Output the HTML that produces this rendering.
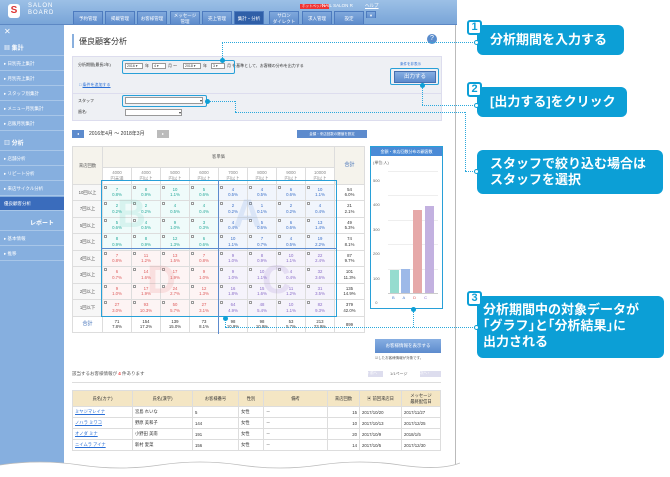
<!DOCTYPE html>
<html><head><meta charset="utf-8">
<style>
*{box-sizing:border-box;margin:0;padding:0}
body{width:670px;height:477px;background:#fff;font-family:"Liberation Sans","Noto Sans CJK JP",sans-serif;position:relative;overflow:hidden;color:#333}
.a{position:absolute}
#hdr{left:0;top:0;width:457px;height:25px;background:linear-gradient(#9cc0e6,#79a5d8);border-bottom:1px solid #5c88c4}
.tab{position:absolute;top:11px;height:13px;background:linear-gradient(#7fa8dc,#5e8ccc);color:#fff;font-size:4.5px;text-align:center;line-height:13px;border:1px solid #4d7bbf;border-bottom:none}
.tab.s{background:#2f5fa8}
.tab.t{line-height:6px;padding-top:1px}
#side{left:0;top:25px;width:64px;height:445px;background:#86afdf}
.si{position:absolute;left:0;width:64px;height:14px;border-bottom:1px solid #a8c6e8;color:#fff;font-size:4.5px;line-height:14px;padding-left:4px}
.sh{font-size:6px;font-weight:bold}
.sel{background:#3a6cbc}
#main{left:64px;top:25px;width:392px;height:440px;background:#fff;border-right:1px solid #bbb}
.fs{font-size:4.5px}
table.g{position:absolute;left:72px;top:146px;border-collapse:collapse;font-size:4.3px}
table.g td{border:1px solid #ddd;text-align:center;vertical-align:middle;position:relative;width:29px;height:16.5px;line-height:5.5px}
table.g td i{position:absolute;left:1px;top:1px;width:3px;height:3px;border:1px solid #999;background:#fff}
.b{background:#effbfa;color:#26a99a}.A{background:#f1f5fc;color:#3a6fc8}.d{background:#fdf4f4;color:#de5c5c}.c{background:#f5f3fb;color:#8a6cc8}
.h{background:#f5f3ec;color:#555}
.co{position:absolute;background:#0c9fd6;border-radius:6px;color:#fff;font-weight:bold;font-size:13px;line-height:16px;padding-left:13px}
.num{position:absolute;width:15px;height:15px;background:#fff;border:2px solid #0c9fd6;border-radius:3px;color:#0c9fd6;font-weight:bold;font-size:11px;line-height:11px;text-align:center}
.dh{position:absolute;border-top:1px dotted #2aa8dc;height:0}
.dv{position:absolute;border-left:1px dotted #2aa8dc;width:0}
.dot{position:absolute;width:5px;height:5px;border-radius:50%;background:#0c9fd6}
.wb{position:absolute;border:1.5px solid #28a0d8}
.ct{position:absolute;left:72px;top:390px;border-collapse:collapse;font-size:4.3px;width:369px}
.ct td{border:1px solid #ddd;height:11px;padding:0 2px}
.ct tr:first-child td{background:#f4e6c4;height:16px;text-align:center}
.lk{color:#2a6fd6;text-decoration:underline}
.sb{position:absolute;height:6px;background:#fff;border:1px solid #999;font-size:3.5px;line-height:4px;padding-left:1px}
</style></head><body>

<div id="hdr" class="a">
 <div class="a" style="left:8px;top:4px;width:12px;height:14px;background:#fff;border-radius:3px;color:#d33;font-weight:bold;font-size:10px;line-height:14px;text-align:center">S</div>
 <div class="a" style="left:28px;top:3px;color:#fff;font-size:6px;line-height:7px;letter-spacing:1px">SALON<br>BOARD</div>
 <div class="a fs" style="left:300px;top:4px;background:#e33;color:#fff;padding:0 2px;font-size:3.5px">ホットペッパー</div>
 <div class="a fs" style="left:322px;top:3px;color:#fff">NAIL SALON R</div>
 <div class="a fs" style="left:365px;top:3px;color:#fff;text-decoration:underline">ヘルプ</div>
 <div class="tab" style="left:73px;width:30px">予約管理</div>
 <div class="tab" style="left:105px;width:30px">掲載管理</div>
 <div class="tab" style="left:137px;width:30px">お客様管理</div>
 <div class="tab t" style="left:170px;width:30px">メッセージ<br>管理</div>
 <div class="tab" style="left:202px;width:30px">売上管理</div>
 <div class="tab s" style="left:234px;width:30px">集計・分析</div>
 <div class="tab t" style="left:269px;width:30px">サロン<br>ダイレクト</div>
 <div class="tab" style="left:302px;width:30px">求人管理</div>
 <div class="tab" style="left:334px;width:30px">設定</div>
 <div class="tab" style="left:366px;width:10px;top:11px;height:7px;line-height:7px">▾</div>
</div>

<div id="side" class="a">
 <div class="si" style="top:0;font-size:8px;border:none">✕</div>
 <div class="si sh" style="top:17px">▦ 集計</div>
 <div class="si" style="top:32px">▸ 日別売上集計</div>
 <div class="si" style="top:47px">▸ 月別売上集計</div>
 <div class="si" style="top:62px">▸ スタッフ別集計</div>
 <div class="si" style="top:77px">▸ メニュー月別集計</div>
 <div class="si" style="top:92px">▸ 店販月別集計</div>
 <div class="si sh" style="top:112px">▥ 分析</div>
 <div class="si" style="top:127px">▸ 店舗分析</div>
 <div class="si" style="top:142px">▸ リピート分析</div>
 <div class="si" style="top:157px">▸ 来店サイクル分析</div>
 <div class="si sel" style="top:172px">優良顧客分析</div>
 <div class="si sh" style="top:192px;padding-left:30px">レポート</div>
 <div class="si" style="top:207px">▸ 基本情報</div>
 <div class="si" style="top:222px">▸ 推移</div>
</div>

<div id="main" class="a"></div>
<div class="a" style="left:72px;top:34px;width:2px;height:14px;background:#8ab0de"></div>
<div class="a" style="left:79px;top:36px;font-size:8px">優良顧客分析</div>
<div class="a" style="left:427px;top:34px;width:10px;height:10px;border-radius:50%;background:#5a8ccc;color:#fff;font-size:7px;text-align:center;line-height:10px">?</div>

<div class="a" style="left:72px;top:56px;width:370px;height:65px;background:#eef0f4;border:1px solid #dde"></div>
<div class="a" style="left:72px;top:93px;width:370px;height:1px;background:#dde"></div>
<div class="a fs" style="left:78px;top:62px;font-size:4px">分析期間(最長2年)</div>
<div class="sb" style="left:125px;top:63px;width:18px">2016 ▾</div>
<div class="a" style="left:145px;top:63px;font-size:4px">年</div>
<div class="sb" style="left:152px;top:63px;width:14px">4 ▾</div>
<div class="a" style="left:168px;top:63px;font-size:4px">月 ～</div>
<div class="sb" style="left:183px;top:63px;width:18px">2018 ▾</div>
<div class="a" style="left:203px;top:63px;font-size:4px">年</div>
<div class="sb" style="left:211px;top:63px;width:14px">3 ▾</div>
<div class="a" style="left:227px;top:63px;font-size:4px;white-space:nowrap">月 を基準として、お客様の分布を出力する</div>
<div class="a fs" style="left:79px;top:82px;color:#2a6fd6;font-size:4px">□ <u>条件を追加する</u></div>
<div class="a fs" style="left:78px;top:98px;font-size:4px">スタッフ</div>
<div class="a fs" style="left:78px;top:109px;font-size:4px">歯名:</div>
<div class="a" style="left:125px;top:97px;width:78px;height:7px;background:#fff;border:1px solid #999;font-size:4px;text-align:right;line-height:5px">▾</div>
<div class="a" style="left:125px;top:109px;width:57px;height:7px;background:#fff;border:1px solid #999;font-size:4px;text-align:right;line-height:5px">▾</div>
<div class="a fs" style="left:400px;top:62px;color:#2a6fd6;font-size:3.5px">条件を非表示</div>
<div class="a" style="left:394px;top:71px;width:42px;height:12px;background:linear-gradient(#86aee2,#5d8bcd);border:1px solid #466fb0;color:#fff;font-size:5.5px;text-align:center;line-height:10px">出力する</div>
<div class="wb" style="left:390px;top:68px;width:49px;height:17px;border-radius:2px"></div>
<div class="wb" style="left:122px;top:60px;width:113px;height:14px;border-radius:2px"></div>
<div class="wb" style="left:122px;top:95px;width:85px;height:12px;border-radius:2px"></div>

<div class="a" style="left:72px;top:130px;width:12px;height:8px;background:#5d8bcd;color:#fff;font-size:4px;text-align:center;line-height:8px">◂</div>
<div class="a" style="left:89px;top:130px;font-size:5px">2016年4月 ～ 2018年3月</div>
<div class="a" style="left:157px;top:130px;width:12px;height:8px;background:#bbb;color:#fff;font-size:4px;text-align:center;line-height:8px">▸</div>
<div class="a" style="left:297px;top:130px;width:70px;height:8px;background:#5d8bcd;color:#fff;font-size:3.5px;text-align:center;line-height:8px">金額・来店回数の閾値を設定</div>

<table class="g">
<tr><td class="h" rowspan="2" style="width:30px">来店回数</td><td class="h" colspan="8" style="height:21px">客単価</td><td class="h" rowspan="2" style="width:30px;color:#2a5fb0;font-size:5px">合計</td></tr>
<tr><td style="height:13px;color:#888">4000<br>円未満</td><td style="color:#888">4000<br>円以上</td><td style="color:#888">5000<br>円以上</td><td style="color:#888">6000<br>円以上</td><td style="color:#888">7000<br>円以上</td><td style="color:#888">8000<br>円以上</td><td style="color:#888">9000<br>円以上</td><td style="color:#888">10000<br>円以上</td></tr>
<tr><td class="h" style="background:#f7f7f7">10回以上</td><td class="b"><i></i>7<br>0.8%</td><td class="b"><i></i>8<br>0.9%</td><td class="b"><i></i>10<br>1.1%</td><td class="b"><i></i>5<br>0.6%</td><td class="A"><i></i>4<br>0.5%</td><td class="A"><i></i>4<br>0.5%</td><td class="A"><i></i>6<br>0.6%</td><td class="A"><i></i>10<br>1.1%</td><td>54<br>6.0%</td></tr>
<tr><td class="h" style="background:#f7f7f7">7回以上</td><td class="b"><i></i>2<br>0.2%</td><td class="b"><i></i>2<br>0.2%</td><td class="b"><i></i>4<br>0.5%</td><td class="b"><i></i>4<br>0.4%</td><td class="A"><i></i>2<br>0.2%</td><td class="A"><i></i>1<br>0.1%</td><td class="A"><i></i>2<br>0.2%</td><td class="A"><i></i>4<br>0.4%</td><td>21<br>2.1%</td></tr>
<tr><td class="h" style="background:#f7f7f7">5回以上</td><td class="b"><i></i>5<br>0.6%</td><td class="b"><i></i>4<br>0.5%</td><td class="b"><i></i>9<br>1.0%</td><td class="b"><i></i>3<br>0.3%</td><td class="A"><i></i>4<br>0.4%</td><td class="A"><i></i>5<br>0.6%</td><td class="A"><i></i>6<br>0.6%</td><td class="A"><i></i>13<br>1.4%</td><td>49<br>5.3%</td></tr>
<tr><td class="h" style="background:#f7f7f7">3回以上</td><td class="b"><i></i>8<br>0.9%</td><td class="b"><i></i>8<br>0.9%</td><td class="b"><i></i>12<br>1.3%</td><td class="b"><i></i>6<br>0.6%</td><td class="A"><i></i>10<br>1.1%</td><td class="A"><i></i>7<br>0.7%</td><td class="A"><i></i>4<br>0.5%</td><td class="A"><i></i>19<br>2.2%</td><td>74<br>8.1%</td></tr>
<tr><td class="h" style="background:#f7f7f7">4回以上</td><td class="d"><i></i>7<br>0.8%</td><td class="d"><i></i>11<br>1.2%</td><td class="d"><i></i>13<br>1.5%</td><td class="d"><i></i>7<br>0.8%</td><td class="c"><i></i>9<br>1.0%</td><td class="c"><i></i>8<br>0.9%</td><td class="c"><i></i>10<br>1.1%</td><td class="c"><i></i>22<br>2.4%</td><td>87<br>9.7%</td></tr>
<tr><td class="h" style="background:#f7f7f7">3回以上</td><td class="d"><i></i>6<br>0.7%</td><td class="d"><i></i>14<br>1.6%</td><td class="d"><i></i>17<br>1.9%</td><td class="d"><i></i>9<br>1.0%</td><td class="c"><i></i>9<br>1.0%</td><td class="c"><i></i>10<br>1.1%</td><td class="c"><i></i>4<br>0.4%</td><td class="c"><i></i>32<br>3.6%</td><td>101<br>11.3%</td></tr>
<tr><td class="h" style="background:#f7f7f7">2回以上</td><td class="d"><i></i>9<br>1.0%</td><td class="d"><i></i>17<br>1.9%</td><td class="d"><i></i>24<br>2.7%</td><td class="d"><i></i>12<br>1.3%</td><td class="c"><i></i>16<br>1.8%</td><td class="c"><i></i>15<br>1.6%</td><td class="c"><i></i>11<br>1.2%</td><td class="c"><i></i>31<br>3.5%</td><td>135<br>14.9%</td></tr>
<tr><td class="h" style="background:#f7f7f7">1回以下</td><td class="d"><i></i>27<br>3.0%</td><td class="d"><i></i>93<br>10.3%</td><td class="d"><i></i>50<br>5.7%</td><td class="d"><i></i>27<br>3.1%</td><td class="c"><i></i>64<br>4.9%</td><td class="c"><i></i>48<br>5.4%</td><td class="c"><i></i>10<br>1.1%</td><td class="c"><i></i>82<br>9.3%</td><td>379<br>42.0%</td></tr>
<tr><td style="color:#2a5fb0;font-size:5px">合計</td><td>71<br>7.8%</td><td>154<br>17.2%</td><td>139<br>15.0%</td><td>73<br>8.1%</td><td>98<br>10.9%</td><td>98<br>10.9%</td><td>53<br>5.7%</td><td>213<br>23.9%</td><td>899</td></tr>
</table>
<div class="a" style="left:117px;top:192px;font-size:40px;color:rgba(80,200,180,.15);font-weight:bold">B</div>
<div class="a" style="left:233px;top:192px;font-size:40px;color:rgba(90,140,220,.15);font-weight:bold">A</div>
<div class="a" style="left:147px;top:258px;font-size:40px;color:rgba(230,110,110,.15);font-weight:bold">D</div>
<div class="a" style="left:262px;top:258px;font-size:40px;color:rgba(140,110,200,.15);font-weight:bold">C</div>
<div class="wb" style="left:101px;top:180px;width:236px;height:137px;border-width:1px"></div>
<div class="a" style="left:218px;top:180px;width:1px;height:154px;background:#5d8bcd"></div>
<div class="a" style="left:101px;top:248px;width:236px;height:1px;background:#5d8bcd"></div>

<div class="a" style="left:370px;top:146px;width:73px;height:163px;border:1.5px solid #28a0d8;background:#fff"></div>
<div class="a" style="left:371px;top:147px;width:71px;height:9px;background:#4a8ad6;color:#fff;font-size:4px;line-height:9px;text-align:center">金額・来店回数分布の顧客数</div>
<div class="a" style="left:373px;top:160px;font-size:4px;color:#666">(単位:人)</div>
<div class="a" style="left:373px;top:169px;font-size:4px;color:#666;line-height:24.4px;width:14px">500<br>400<br>300<br>200<br>100<br>&nbsp;&nbsp;0</div>
<div class="a" style="left:388px;top:171px;width:50px;height:1px;background:#eee"></div>
<div class="a" style="left:388px;top:195px;width:50px;height:1px;background:#eee"></div>
<div class="a" style="left:388px;top:220px;width:50px;height:1px;background:#eee"></div>
<div class="a" style="left:388px;top:244px;width:50px;height:1px;background:#eee"></div>
<div class="a" style="left:388px;top:269px;width:50px;height:1px;background:#eee"></div>
<div class="a" style="left:388px;top:293px;width:50px;height:1px;background:#ccc"></div>
<div class="a" style="left:390px;top:270px;width:9px;height:23px;background:#96dccf"></div>
<div class="a" style="left:401px;top:269px;width:9px;height:24px;background:#9db9e8"></div>
<div class="a" style="left:413px;top:210px;width:9px;height:83px;background:#e6a9a9"></div>
<div class="a" style="left:425px;top:206px;width:9px;height:87px;background:#c3b1e0"></div>
<div class="a" style="left:392px;top:295px;font-size:4px;color:#4a7ac8;word-spacing:7px">B A <span style="color:#d55">D</span> <span style="color:#86c">C</span></div>

<div class="a" style="left:375px;top:339px;width:66px;height:14px;background:linear-gradient(#86aee2,#5d8bcd);color:#fff;font-size:4.5px;text-align:center;line-height:14px">お客様情報を表示する</div>
<div class="a" style="left:375px;top:356px;font-size:3.5px;color:#555">☑したお客様情報が対象です。</div>

<div class="a" style="left:72px;top:371px;font-size:4.5px;color:#555">該当するお客様情報が <b style="color:#e33">4</b> 件あります</div>
<div class="a" style="left:368px;top:371px;width:15px;height:6px;background:#dde;font-size:3.5px;color:#fff">‹ 前へ</div>
<div class="a" style="left:390px;top:371px;font-size:4px;color:#666">1/1ページ</div>
<div class="a" style="left:420px;top:371px;width:21px;height:6px;background:#dde;font-size:3.5px;color:#fff">次へ ›</div>
<div class="a" style="left:72px;top:382px;width:369px;height:1px;background:#ddd"></div>

<table class="ct">
<tr><td style="width:60px">氏名(カナ)</td><td style="width:60px">氏名(漢字)</td><td style="width:46px">お客様番号</td><td style="width:25px">性別</td><td style="width:64px">備考</td><td style="width:32px">来店回数</td><td style="width:42px">▣ 前回来店日</td><td>メッセージ<br>最終配信日</td></tr>
<tr><td class="lk">ミヤジマレイナ</td><td>宮島 れいな</td><td>5</td><td>女性</td><td>－</td><td style="text-align:right">15</td><td>2017/10/20</td><td>2017/11/27</td></tr>
<tr><td class="lk">ノハラ ミワコ</td><td>野原 美和子</td><td>144</td><td>女性</td><td>－</td><td style="text-align:right">10</td><td>2017/10/13</td><td>2017/12/25</td></tr>
<tr><td class="lk">オノダ ミナ</td><td>小野田 美南</td><td>191</td><td>女性</td><td>－</td><td style="text-align:right">20</td><td>2017/10/9</td><td>2018/1/5</td></tr>
<tr><td class="lk">ニイムラ アイナ</td><td>新村 愛菜</td><td>156</td><td>女性</td><td>－</td><td style="text-align:right">14</td><td>2017/10/5</td><td>2017/12/30</td></tr>
</table>

<svg class="a" style="left:0;top:455px" width="460" height="22"><path d="M0 10 Q40 4 80 10 T160 10 T240 10 T320 10 T400 10 T460 8 V22 H0Z" fill="#fff"/><path d="M0 10 Q40 4 80 10 T160 10 T240 10 T320 10 T400 10 T460 8" fill="none" stroke="#bbb" stroke-width="0.8"/></svg>

<div class="dh" style="left:222px;top:42px;width:255px"></div>
<div class="dv" style="left:222px;top:42px;height:18px"></div>
<div class="dot" style="left:220px;top:58px"></div>
<div class="dh" style="left:422px;top:105px;width:55px"></div>
<div class="dv" style="left:422px;top:85px;height:20px"></div>
<div class="dot" style="left:420px;top:83px"></div>
<div class="dh" style="left:207px;top:101px;width:28px"></div>
<div class="dot" style="left:205px;top:99px"></div>
<div class="dv" style="left:235px;top:101px;height:11px"></div>
<div class="dh" style="left:235px;top:112px;width:230px"></div>
<div class="dv" style="left:465px;top:112px;height:59px"></div>
<div class="dh" style="left:465px;top:171px;width:12px"></div>
<div class="dv" style="left:225px;top:318px;height:9px"></div>
<div class="dot" style="left:223px;top:316px"></div>
<div class="dv" style="left:413px;top:309px;height:18px"></div>
<div class="dot" style="left:411px;top:307px"></div>
<div class="dh" style="left:225px;top:327px;width:252px"></div>

<div class="co" style="left:477px;top:25px;width:147px;height:30px;padding-top:7px">分析期間を入力する</div>
<div class="num" style="left:467px;top:20px">1</div>
<div class="co" style="left:477px;top:87px;width:150px;height:30px;padding-top:7px">[出力する]をクリック</div>
<div class="num" style="left:467px;top:82px">2</div>
<div class="co" style="left:477px;top:150px;width:186px;height:44px;padding-top:6px">スタッフで絞り込む場合は<br>スタッフを選択</div>
<div class="co" style="left:477px;top:296px;width:187px;height:62px;padding-top:6px;padding-left:6px">分析期間中の対象データが<br>｢グラフ｣と｢分析結果｣に<br>出力される</div>
<div class="num" style="left:467px;top:291px">3</div>
<div class="dot" style="left:474px;top:40px;background:#fff;border:1px solid #0c9fd6"></div>
<div class="dot" style="left:474px;top:103px;background:#fff;border:1px solid #0c9fd6"></div>
<div class="dot" style="left:474px;top:169px;background:#fff;border:1px solid #0c9fd6"></div>
<div class="dot" style="left:474px;top:325px;background:#fff;border:1px solid #0c9fd6"></div>
</body></html>
